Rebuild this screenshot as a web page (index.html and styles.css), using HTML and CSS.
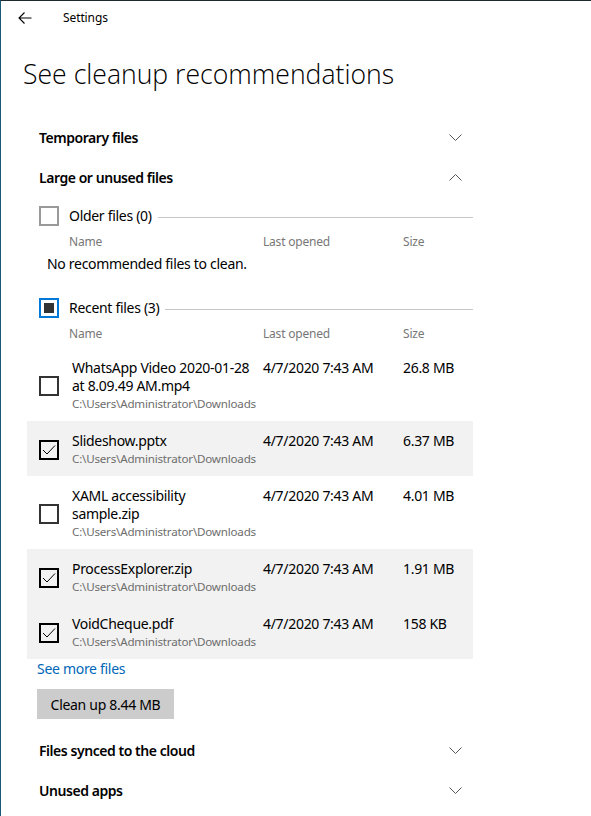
FILE: index.html
```html
<!DOCTYPE html>
<html>
<head>
<meta charset="utf-8">
<link rel="stylesheet" href="styles.css">
</head>
<body>
<div class="window">
  <header class="titlebar">
    <svg class="back" width="14" height="12" viewBox="0 0 14 12"><path d="M13.5 6H1M6.5 0.5L1 6l5.5 5.5" fill="none" stroke="#000" stroke-width="1.1"/></svg>
    <span class="app">Settings</span>
  </header>
  <h1 class="title">See cleanup recommendations</h1>

  <div class="content">
    <div class="expander"><span>Temporary files</span><svg class="chev" width="13" height="7" viewBox="0 0 13 7"><path d="M0.5 0.5l6 6 6-6" fill="none" stroke="#555" stroke-width="1"/></svg></div>
    <div class="expander"><span>Large or unused files</span><svg class="chev" width="13" height="7" viewBox="0 0 13 7"><path d="M0.5 6.5l6-6 6 6" fill="none" stroke="#555" stroke-width="1"/></svg></div>

    <div class="group g-older">
      <span class="cb cb-disabled"></span>
      <span class="group-label">Older files (0)</span>
      <span class="rule"></span>
    </div>
    <div class="cols c-older"><span class="col-name">Name</span><span class="col-date">Last opened</span><span class="col-size">Size</span></div>
    <div class="empty">No recommended files to clean.</div>

    <div class="group g-recent">
      <span class="cb cb-partial"><span class="dot"></span></span>
      <span class="group-label">Recent files (3)</span>
      <span class="rule"></span>
    </div>
    <div class="cols c-recent"><span class="col-name">Name</span><span class="col-date">Last opened</span><span class="col-size">Size</span></div>

    <div class="files">
      <div class="file">
        <span class="cb"></span>
        <div class="fname"><div class="n">WhatsApp Video 2020-01-28<br>at 8.09.49 AM.mp4</div><div class="p">C:\Users\Administrator\Downloads</div></div>
        <div class="fdate">4/7/2020 7:43 AM</div>
        <div class="fsize">26.8 MB</div>
      </div>
      <div class="file sel">
        <span class="cb cb-checked"><svg width="14" height="10" viewBox="0 0 14 10"><path d="M1 5l4 4 8-8.5" fill="none" stroke="#000" stroke-width="1"/></svg></span>
        <div class="fname"><div class="n">Slideshow.pptx</div><div class="p">C:\Users\Administrator\Downloads</div></div>
        <div class="fdate">4/7/2020 7:43 AM</div>
        <div class="fsize">6.37 MB</div>
      </div>
      <div class="file">
        <span class="cb"></span>
        <div class="fname"><div class="n">XAML accessibility<br>sample.zip</div><div class="p">C:\Users\Administrator\Downloads</div></div>
        <div class="fdate">4/7/2020 7:43 AM</div>
        <div class="fsize">4.01 MB</div>
      </div>
      <div class="file sel">
        <span class="cb cb-checked"><svg width="14" height="10" viewBox="0 0 14 10"><path d="M1 5l4 4 8-8.5" fill="none" stroke="#000" stroke-width="1"/></svg></span>
        <div class="fname"><div class="n">ProcessExplorer.zip</div><div class="p">C:\Users\Administrator\Downloads</div></div>
        <div class="fdate">4/7/2020 7:43 AM</div>
        <div class="fsize">1.91 MB</div>
      </div>
      <div class="file sel">
        <span class="cb cb-checked"><svg width="14" height="10" viewBox="0 0 14 10"><path d="M1 5l4 4 8-8.5" fill="none" stroke="#000" stroke-width="1"/></svg></span>
        <div class="fname"><div class="n">VoidCheque.pdf</div><div class="p">C:\Users\Administrator\Downloads</div></div>
        <div class="fdate">4/7/2020 7:43 AM</div>
        <div class="fsize">158 KB</div>
      </div>
    </div>

    <a class="more" href="#">See more files</a>
    <div class="btn-row"><button class="btn">Clean up 8.44 MB</button></div>

    <div class="expander ex-cloud"><span>Files synced to the cloud</span><svg class="chev" width="13" height="7" viewBox="0 0 13 7"><path d="M0.5 0.5l6 6 6-6" fill="none" stroke="#555" stroke-width="1"/></svg></div>
    <div class="expander"><span>Unused apps</span><svg class="chev" width="13" height="7" viewBox="0 0 13 7"><path d="M0.5 0.5l6 6 6-6" fill="none" stroke="#555" stroke-width="1"/></svg></div>
  </div>
</div>
</body>
</html>
```

FILE: styles.css
```css
* { box-sizing: border-box; }
html, body { margin: 0; padding: 0; background: #fff; }
body {
  font-family: "Noto Sans", "Open Sans", sans-serif;
  font-size: 14px;
  letter-spacing: -0.3px;
  color: #000;
  width: 591px;
  height: 816px;
  overflow: hidden;
}
.window {
  height: 816px;
  border-top: 1px solid #1e2a30;
  border-left: 1px solid #1b5a76;
}
.titlebar {
  height: 33px;
  display: flex;
  align-items: center;
}
.back { margin-left: 17px; }
.app { margin-left: 31px; font-size: 12px; letter-spacing: -0.1px; }
.title {
  margin: 20px 0 0 22px;
  font-family: "Open Sans", "Noto Sans", sans-serif;
  font-weight: 300;
  font-size: 26.6px;
  letter-spacing: 0;
  line-height: 40px;
}
.content {
  margin-top: 23px;
  margin-left: 26px;
  width: 446px;
}
.expander {
  height: 40px;
  display: flex;
  align-items: center;
  justify-content: space-between;
  padding: 0 11px 0 12px;
  font-weight: 600;
  letter-spacing: -0.45px;
}
.chev { display: block; }
.group {
  display: flex;
  align-items: center;
  height: 20px;
  padding-left: 12px;
}
.g-older { margin-top: 9px; }
.g-recent { margin-top: 24px; }
.group-label { margin-left: 10px; line-height: 20px; white-space: nowrap; }
.rule { flex: 1; height: 1px; background: #c6c6c6; margin-left: 6px; margin-top: 2px; }
.cb {
  width: 20px; height: 20px;
  border: 2px solid #333;
  flex: none;
  display: flex;
  align-items: center;
  justify-content: center;
}
.cb-disabled { border-color: #9a9a9a; }
.cb-partial { border-color: #0078d7; }
.cb-partial .dot { width: 10px; height: 10px; background: #333; }
.cb-checked { border-color: #000; }
.cb-checked svg { display: block; }
.cols {
  display: flex;
  font-size: 12px;
  letter-spacing: -0.2px;
  color: #777;
  line-height: 16px;
  padding-left: 42px;
}
.c-older { margin-top: 8px; }
.c-recent { margin-top: 8px; }
.col-name { width: 194px; }
.col-date { width: 140px; }
.empty { margin-top: 4px; line-height: 20px; padding-left: 20px; }
.files { margin-top: 6px; }
.file {
  display: flex;
  align-items: center;
  padding: 11px 0 8px 12px;
}
.file.sel { background: #f2f2f2; }
.fname { width: 191px; margin-left: 13px; align-self: flex-start; }
.n { line-height: 18px; }
.p { font-size: 11.6px; letter-spacing: -0.2px; color: #6d6d6d; line-height: 18px; white-space: nowrap; }
.fdate, .fsize { align-self: flex-start; line-height: 18px; }
.fdate { width: 140px; }
.more {
  display: block;
  color: #0067b8;
  text-decoration: none;
  line-height: 18px;
  margin-top: 1px;
  padding-left: 10px;
}
.btn-row { margin-top: 11px; padding-left: 10px; }
.btn {
  height: 30px;
  width: 137px;
  border: none;
  background: #cccccc;
  font-family: inherit;
  font-size: 14px;
  letter-spacing: -0.3px;
  color: #000;
  padding: 0;
}
.ex-cloud { margin-top: 11px; }
```
